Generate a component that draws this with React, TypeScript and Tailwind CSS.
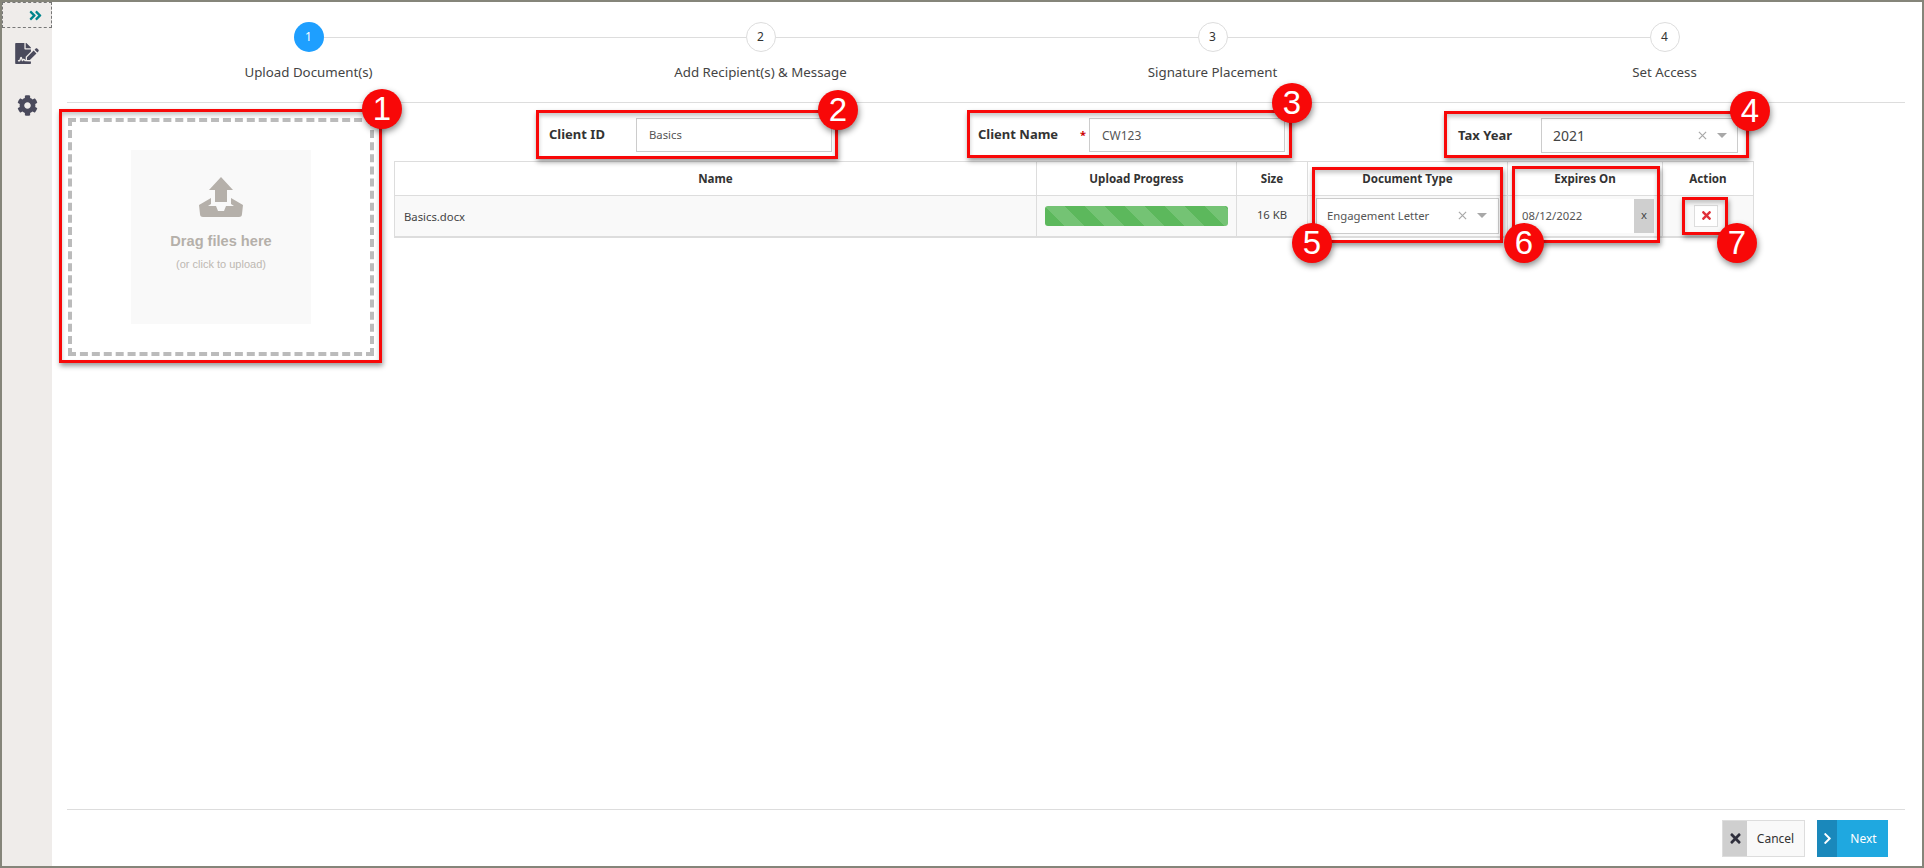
import React from "react";
import { FaAngleDoubleRight, FaFileSignature, FaCog, FaTimes, FaChevronRight } from "react-icons/fa";

const font = "font-['Noto_Sans','Open_Sans',sans-serif]";

function Caret() {
  return (
    <svg width="10" height="5" viewBox="0 0 10 5" className="shrink-0">
      <path d="M0 0h10L5 5z" fill="#a8a8a8" />
    </svg>
  );
}

function ClearX() {
  return (
    <svg width="9" height="9" viewBox="0 0 10 10" className="shrink-0">
      <path d="M1 1l8 8M9 1l-8 8" stroke="#a8a8a8" strokeWidth="1.300" fill="none" />
    </svg>
  );
}

function Step({ n, label, active, first, last }: { n: number; label: string; active?: boolean; first?: boolean; last?: boolean }) {
  return (
    <div className="w-[452px] flex flex-col items-center">
      <div className="w-full flex items-center">
        <div className={first ? "flex-1 h-[1px]" : "flex-1 h-[1px] bg-[#ddd]"} />
        <div
          className={
            active
              ? "w-[30px] h-[30px] rounded-full bg-[#1e9fff] text-white flex items-center justify-center text-[12px]"
              : "w-[30px] h-[30px] rounded-full border border-[#ddd] bg-white text-[#333] flex items-center justify-center text-[12px]"
          }
        >
          {n}
        </div>
        <div className={last ? "flex-1 h-[1px]" : "flex-1 h-[1px] bg-[#ddd]"} />
      </div>
      <div className="mt-[11px] text-[13.300px] leading-[18px] text-[#444] whitespace-nowrap">{label}</div>
    </div>
  );
}

function Badge({ n, cls }: { n: number; cls: string }) {
  return (
    <div
      className={
        "absolute w-[40px] h-[40px] rounded-full bg-[#f80808] text-white flex items-center justify-center text-[33px] font-['Liberation_Sans',sans-serif] shadow-[1px_3px_6px_rgba(0,0,0,0.45)] " +
        cls
      }
    >
      {n}
    </div>
  );
}

const redBox = "absolute border-[3px] border-[#f80808] shadow-[1px_3px_5px_rgba(0,0,0,0.4),inset_0_3px_4px_rgba(0,0,0,0.22)] pointer-events-none ";

const th = "border border-[#ddd] font-bold text-[11.600px] text-[#333] text-center h-[34px] p-0";
const td = "border-x border-[#ddd] border-b-2 text-[11.300px] text-[#444] h-[41px] p-0";

export default function App() {
  return (
    <div className={"relative w-[1924px] h-[868px] bg-white overflow-hidden " + font}>
      <div className="w-full h-full border-2 border-[#85857a] flex">
        <aside className="w-[50px] shrink-0 bg-[#efecea] flex flex-col items-center">
          <div className="w-full h-[26px] border border-dashed border-[#777] flex items-center justify-end pr-[8px]">
            <FaAngleDoubleRight className="text-[#00858c] text-[15px]" />
          </div>
          <FaFileSignature className="mt-[15px] text-[#4a4a5c] text-[21px] w-[24px]" />
          <FaCog className="mt-[31px] text-[#4a4a5c] text-[21px]" />
        </aside>

        <main className="flex-1 flex flex-col pl-[15px] pr-[17px]">
          <div className="h-[101px] border-b border-[#ddd] shrink-0 flex justify-center pt-[20px]">
            <div className="flex ml-[1px]">
              <Step n={1} label="Upload Document(s)" active first />
              <Step n={2} label="Add Recipient(s) & Message" />
              <Step n={3} label="Signature Placement" />
              <Step n={4} label="Set Access" last />
            </div>
          </div>

          <div className="flex-1 flex pt-[15px]">
            <div className="w-[306px] h-[238px] ml-[1px] shrink-0 border-[4px] border-dashed border-[#bbbbbb] flex items-center justify-center">
              <div className="w-[180px] h-[174px] bg-[#f9f9f9] flex flex-col items-center pt-[27px] font-['Liberation_Sans',sans-serif]">
                <svg width="46" height="40" viewBox="0 0 46 40">
                  <path d="M23 0L35 13h-6v12h-12V13h-6z" fill="#b5b0aa" />
                  <path d="M13 21v6l-3 2h8l2 5h6l2-5h8l-3-2v-6l12 7-1 9q0 3-3 3H5q-3 0-3-3L1 28z" fill="#b5b0aa" />
                </svg>
                <div className="mt-[14px] text-[14.600px] font-bold text-[#b5b0aa] leading-[20px]">Drag files here</div>
                <div className="mt-[6px] text-[11px] text-[#bdb8b2] leading-[14px]">(or click to upload)</div>
              </div>
            </div>

            <div className="ml-[20px] w-[1359px] shrink-0">
              <div className="flex h-[35px] items-start text-[13px]">
                <div className="w-[438px] flex justify-end items-center">
                  <span className="w-[87px] font-bold text-[#333]">Client ID</span>
                  <div className="w-[196px] h-[34px] border border-[#ccc] flex items-center px-[12px] pt-[1px] text-[11.300px] text-[#555]">Basics</div>
                </div>
                <div className="w-[453px] flex justify-end items-center">
                  <span className="w-[102px] font-bold text-[#333]">Client Name</span>
                  <span className="w-[9px] text-[#c00] text-[11px] font-bold">*</span>
                  <div className="w-[196px] h-[34px] border border-[#ccc] flex items-center px-[12px] pt-[1px] text-[12px] text-[#555]">CW123</div>
                </div>
                <div className="w-[453px] flex justify-end items-center">
                  <span className="w-[83px] font-bold text-[#333]">Tax Year</span>
                  <div className="w-[197px] h-[35px] border border-[#ccc] flex items-center pl-[11px] pr-[10px] text-[14px] text-[#444]">
                    <span className="flex-1">2021</span>
                    <ClearX />
                    <span className="w-[10px]" />
                    <Caret />
                  </div>
                </div>
              </div>

              <table className="mt-[8px] w-[1359px] table-fixed border-collapse">
                <colgroup>
                  <col className="w-[642px]" />
                  <col className="w-[200px]" />
                  <col className="w-[71px]" />
                  <col className="w-[200px]" />
                  <col className="w-[155px]" />
                  <col className="w-[91px]" />
                </colgroup>
                <thead>
                  <tr>
                    <th className={th}>Name</th>
                    <th className={th}>Upload Progress</th>
                    <th className={th}>Size</th>
                    <th className={th}>Document Type</th>
                    <th className={th}>Expires On</th>
                    <th className={th}>Action</th>
                  </tr>
                </thead>
                <tbody>
                  <tr className="bg-[#f9f9f9]">
                    <td className={td + " pl-[9px] pt-[3px]"}>Basics.docx</td>
                    <td className={td}>
                      <div className="mx-[8px] h-[20px] rounded-[3px] bg-[#5cb85c] bg-[linear-gradient(45deg,rgba(255,255,255,0.15)_25%,transparent_25%,transparent_50%,rgba(255,255,255,0.15)_50%,rgba(255,255,255,0.15)_75%,transparent_75%,transparent)] bg-[length:40px_40px]" />
                    </td>
                    <td className={td + " text-center"}>16 KB</td>
                    <td className={td}>
                      <div className="mx-[8px] h-[36px] bg-white border border-[#ccc] flex items-center pl-[10px] pr-[11px] text-[#555]">
                        <span className="flex-1 whitespace-nowrap pt-[1px]">Engagement Letter</span>
                        <ClearX />
                        <span className="w-[10px]" />
                        <Caret />
                      </div>
                    </td>
                    <td className={td}>
                      <div className="ml-[8px] w-[138px] h-[34px] flex bg-white">
                        <div className="flex-1 flex items-center pl-[6px] pt-[1px] text-[#555]">08/12/2022</div>
                        <div className="w-[20px] bg-[#cfcfcf] flex items-center justify-center text-[#444]">x</div>
                      </div>
                    </td>
                    <td className={td}>
                      <div className="ml-[31px] w-[24px] h-[22px] bg-white border border-[#ddd] flex items-center justify-center">
                        <FaTimes className="text-[#e0303a] text-[13px]" />
                      </div>
                    </td>
                  </tr>
                </tbody>
              </table>
            </div>
          </div>

          <div className="border-t border-[#ddd] h-[57px] shrink-0 flex justify-end items-start pt-[10px] pr-[17px] gap-[12px] text-[12px]">
            <div className="w-[83px] h-[37px] border border-[#ddd] bg-[#f9f9f9] flex">
              <div className="w-[24px] bg-[#cfcfcf] flex items-center justify-center">
                <FaTimes className="text-[#2f2f3c] text-[15px]" />
              </div>
              <div className="flex-1 flex items-center justify-center text-[#333]">Cancel</div>
            </div>
            <div className="w-[71px] h-[37px] bg-[#1fa8e0] flex">
              <div className="w-[20px] bg-[#1a88bb] flex items-center justify-center">
                <FaChevronRight className="text-white text-[13px]" />
              </div>
              <div className="flex-1 flex items-center justify-center text-white pl-[2px]">Next</div>
            </div>
          </div>
        </main>
      </div>

      <div className={redBox + "left-[59px] top-[109px] w-[323px] h-[254px]"} />
      <div className={redBox + "left-[536px] top-[110px] w-[302px] h-[49px]"} />
      <div className={redBox + "left-[967px] top-[110px] w-[325px] h-[48px]"} />
      <div className={redBox + "left-[1444px] top-[111px] w-[305px] h-[47px]"} />
      <div className={redBox + "left-[1312px] top-[167px] w-[191px] h-[76px]"} />
      <div className={redBox + "left-[1512px] top-[166px] w-[148px] h-[77px]"} />
      <div className={redBox + "left-[1682px] top-[197px] w-[46px] h-[38px]"} />

      <Badge n={1} cls="left-[362px] top-[89px]" />
      <Badge n={2} cls="left-[818px] top-[90px]" />
      <Badge n={3} cls="left-[1272px] top-[83px]" />
      <Badge n={4} cls="left-[1730px] top-[91px]" />
      <Badge n={5} cls="left-[1292px] top-[223px]" />
      <Badge n={6} cls="left-[1504px] top-[223px]" />
      <Badge n={7} cls="left-[1717px] top-[223px]" />
    </div>
  );
}
